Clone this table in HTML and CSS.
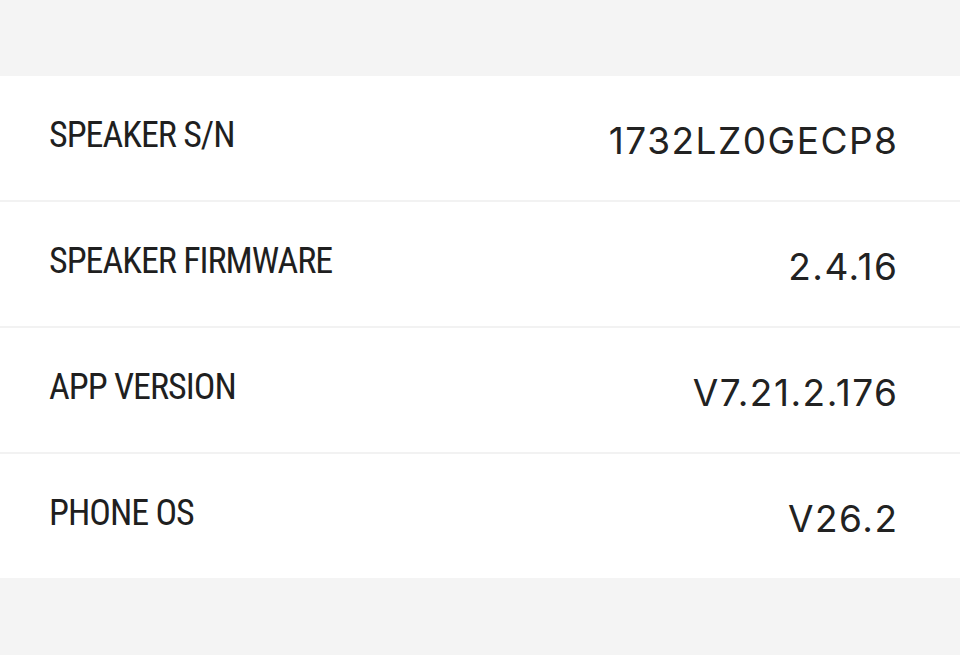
FILE: index.html
```html
<!DOCTYPE html>
<html>
<head>
<meta charset="utf-8">
<link rel="stylesheet" href="styles.css">
</head>
<body>
<div class="page">
  <div class="card">
    <div class="row"><span class="label">SPEAKER S/N</span><span class="value">1732LZ0GECP8</span></div>
    <div class="row"><span class="label">SPEAKER FIRMWARE</span><span class="value">2.4.16</span></div>
    <div class="row"><span class="label">APP VERSION</span><span class="value">V7.21.2.176</span></div>
    <div class="row"><span class="label">PHONE OS</span><span class="value">V26.2</span></div>
  </div>
</div>
</body>
</html>
```
FILE: styles.css
```css
html, body {
  margin: 0;
  padding: 0;
  background: #f4f4f4;
}
.page {
  width: 960px;
  height: 655px;
  padding-top: 76px;
  box-sizing: border-box;
}
.card {
  background: #ffffff;
}
.row {
  height: 124px;
  display: flex;
  align-items: center;
  justify-content: space-between;
  padding: 0 63px 0 49px;
  border-bottom: 2px solid #f2f2f2;
}
.row:last-child {
  border-bottom: none;
}
.label {
  font-family: "Roboto Condensed", "Roboto", sans-serif;
  font-size: 36px;
  font-weight: 450;
  letter-spacing: -1px;
  color: #1f1f1f;
  margin-top: -6px;
}
.value {
  font-family: Inter, Roboto, sans-serif;
  font-size: 37px;
  letter-spacing: 1.5px;
  color: #222222;
  margin-top: 4px;
  margin-right: -1.5px;
}
```
